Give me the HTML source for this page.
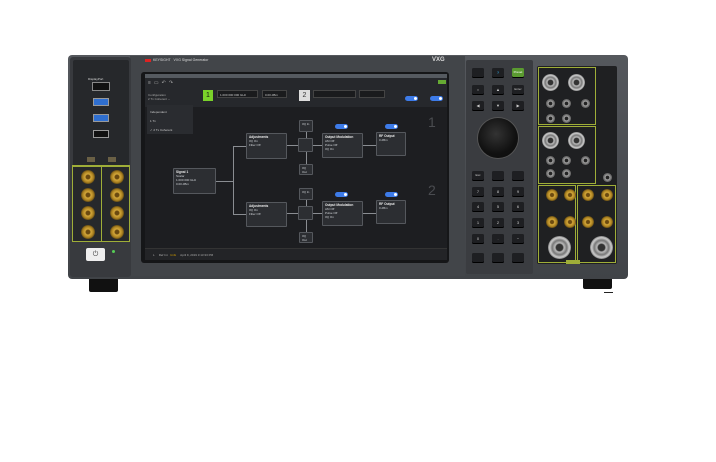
<!DOCTYPE html>
<html><head><meta charset="utf-8"><style>
*{margin:0;padding:0;box-sizing:border-box}
body{width:716px;height:462px;background:#fff;position:relative;overflow:hidden;font-family:"Liberation Sans",sans-serif}
.a{position:absolute}
.box{position:absolute;background:#2c2e32;border:1px solid #55585d;border-radius:1px;color:#cfd2d6;font-size:3px;padding:1px 2px;line-height:4px}
.box b{display:block;font-size:3.2px;color:#e8e8e8}
.ln{position:absolute;background:#8a8d92}
.tg{position:absolute;width:13px;height:5px;border-radius:3px;background:#3d7be8}
.tg:after{content:"";position:absolute;right:1px;top:1px;width:3px;height:3px;border-radius:50%;background:#fff}
.k{position:absolute;width:12px;height:9px;background:#1e1f22;border-radius:1.5px;color:#ccc;font-size:4px;text-align:center;line-height:9px;box-shadow:0 1px 0 #000}
.g{position:absolute;border-radius:50%;background:radial-gradient(circle,#6b4a10 0 20%,#d4a83a 30%,#a98020 55%,#5a4414 72%,#2a2418 100%)}
.b{position:absolute;border-radius:50%;background:radial-gradient(circle,#333 0 20%,#bbb 28%,#777 45%,#ccc 60%,#666 75%,#333 100%)}
.s{position:absolute;border-radius:50%;background:radial-gradient(circle,#222 0 25%,#aaa 35%,#666 60%,#888 80%,#333 100%)}
</style></head><body>
<div class="a" style="left:89px;top:276px;width:29px;height:16px;background:#111;border-radius:0 0 2px 2px"></div>
<div class="a" style="left:583px;top:276px;width:29px;height:13px;background:#111;border-radius:0 0 2px 2px"></div>
<div class="a" style="left:604px;top:292px;width:9px;height:1px;background:#222"></div>
<div class="a" style="left:68px;top:55px;width:560px;height:224px;background:linear-gradient(#55585d,#404347);border-radius:4px"></div>
<div class="a" style="left:130px;top:56px;width:335px;height:220px;background:#424549"></div>
<div class="a" style="left:70px;top:57px;width:61px;height:220px;background:#383a3e;border-radius:3px"></div>
<div class="a" style="left:73px;top:60px;width:56px;height:182px;background:#26282b;border-radius:2px"></div>
<div class="a" style="left:88px;top:77px;font-size:3px;color:#ddd">DisplayPort</div>
<div class="a" style="left:92px;top:82px;width:18px;height:9px;background:#111;border:1px solid #888"></div>
<div class="a" style="left:93px;top:98px;width:16px;height:8px;background:#2f6fd0;border:1px solid #999"></div>
<div class="a" style="left:93px;top:114px;width:16px;height:8px;background:#2f6fd0;border:1px solid #999"></div>
<div class="a" style="left:93px;top:130px;width:16px;height:8px;background:#111;border:1px solid #999"></div>
<div class="a" style="left:87px;top:157px;width:8px;height:5px;background:#6a6045"></div>
<div class="a" style="left:108px;top:157px;width:8px;height:5px;background:#6a6045"></div>
<div class="a" style="left:72px;top:165px;width:58px;height:77px;border:1px solid #9fae38;border-top:2px solid #9fae38"></div>
<div class="a" style="left:101px;top:165px;width:1px;height:77px;background:#9fae38"></div>
<div class="g" style="left:81px;top:170px;width:14px;height:14px"></div>
<div class="g" style="left:81px;top:188px;width:14px;height:14px"></div>
<div class="g" style="left:81px;top:206px;width:14px;height:14px"></div>
<div class="g" style="left:81px;top:225px;width:14px;height:14px"></div>
<div class="g" style="left:110px;top:170px;width:14px;height:14px"></div>
<div class="g" style="left:110px;top:188px;width:14px;height:14px"></div>
<div class="g" style="left:110px;top:206px;width:14px;height:14px"></div>
<div class="g" style="left:110px;top:225px;width:14px;height:14px"></div>
<div class="a" style="left:86px;top:248px;width:19px;height:13px;background:#eee;border-radius:2px;font-size:7px;text-align:center;line-height:13px;color:#444">⏻</div>
<div class="a" style="left:112px;top:250px;width:3px;height:3px;border-radius:50%;background:#5c5"></div>
<div class="a" style="left:145px;top:59px;width:6px;height:3px;background:#d22"></div>
<div class="a" style="left:153px;top:58px;font-size:3.5px;color:#ddd">KEYSIGHT &nbsp; VXG Signal Generator</div>
<div class="a" style="left:432px;top:57px;font-size:6px;color:#ddd;font-weight:bold">VXG</div>
<div class="a" style="left:141px;top:72px;width:308px;height:191px;background:#151618;border-radius:3px"></div>
<div class="a" style="left:145px;top:74px;width:302px;height:186px;background:#1d1e21"></div>
<div class="a" style="left:145px;top:74px;width:302px;height:4px;background:#555a60"></div>
<div class="a" style="left:145px;top:78px;width:302px;height:29px;background:#26282c"></div>
<div class="a" style="left:148px;top:80px;font-size:5px;color:#aaa;letter-spacing:3px">≡▭↶↷</div>
<div class="a" style="left:148px;top:93px;font-size:3px;color:#aaa">Configuration<br>2 Tx Coherent ⌄</div>
<div class="a" style="left:203px;top:90px;width:10px;height:11px;background:#7ad22a;color:#111;font-size:7px;text-align:center;line-height:11px">1</div>
<div class="a" style="left:217px;top:90px;width:41px;height:8px;background:#1a1b1d;border:1px solid #444;font-size:3px;color:#ccc;padding:2px">1.000 000 000 GHz</div>
<div class="a" style="left:262px;top:90px;width:25px;height:8px;background:#1a1b1d;border:1px solid #444;font-size:3px;color:#ccc;padding:2px">0.00 dBm</div>
<div class="a" style="left:299px;top:90px;width:11px;height:11px;background:#ddd;color:#333;font-size:7px;text-align:center;line-height:11px">2</div>
<div class="a" style="left:313px;top:90px;width:43px;height:8px;background:#1a1b1d;border:1px solid #444"></div>
<div class="a" style="left:359px;top:90px;width:26px;height:8px;background:#1a1b1d;border:1px solid #444"></div>
<div class="a" style="left:438px;top:80px;width:8px;height:4px;background:#6a3"></div>
<div class="tg" style="left:405px;top:96px"></div><div class="tg" style="left:430px;top:96px"></div>
<div class="a" style="left:147px;top:105px;width:46px;height:29px;background:#2a2c30;font-size:3px;color:#ccc;padding:3px;line-height:9px">Independent<br>1 Tx<br>✓ 2 Tx Coherent</div>
<div class="ln" style="left:216px;top:181px;width:18px;height:1px"></div>
<div class="ln" style="left:233px;top:146px;width:1px;height:69px"></div>
<div class="ln" style="left:233px;top:146px;width:13px;height:1px"></div>
<div class="ln" style="left:233px;top:214px;width:13px;height:1px"></div>
<div class="ln" style="left:287px;top:145px;width:35px;height:1px"></div>
<div class="ln" style="left:287px;top:213px;width:35px;height:1px"></div>
<div class="ln" style="left:363px;top:145px;width:13px;height:1px"></div>
<div class="ln" style="left:363px;top:213px;width:13px;height:1px"></div>
<div class="ln" style="left:306px;top:132px;width:1px;height:43px"></div>
<div class="ln" style="left:306px;top:200px;width:1px;height:43px"></div>
<div class="box" style="left:173px;top:168px;width:43px;height:26px"><b>Signal 1</b>Scalar<br>1.000 000 GHz<br>0.00 dBm</div>
<div class="box" style="left:246px;top:133px;width:41px;height:26px"><b>Adjustments</b>I/Q On<br>Filter Off</div>
<div class="box" style="left:246px;top:202px;width:41px;height:25px"><b>Adjustments</b>I/Q On<br>Filter Off</div>
<div class="box" style="left:299px;top:120px;width:14px;height:12px">I/Q In</div>
<div class="box" style="left:298px;top:138px;width:15px;height:14px"></div>
<div class="box" style="left:299px;top:164px;width:14px;height:11px">I/Q Out</div>
<div class="box" style="left:299px;top:188px;width:14px;height:12px">I/Q In</div>
<div class="box" style="left:298px;top:206px;width:15px;height:14px"></div>
<div class="box" style="left:299px;top:232px;width:14px;height:11px">I/Q Out</div>
<div class="box" style="left:322px;top:133px;width:41px;height:25px"><b>Output Modulation</b>AM Off<br>Pulse Off<br>I/Q On</div>
<div class="box" style="left:322px;top:201px;width:41px;height:25px"><b>Output Modulation</b>AM Off<br>Pulse Off<br>I/Q On</div>
<div class="box" style="left:376px;top:132px;width:30px;height:24px"><b>RF Output</b>0 dBm</div>
<div class="box" style="left:376px;top:200px;width:30px;height:24px"><b>RF Output</b>0 dBm</div>
<div class="tg" style="left:335px;top:124px"></div><div class="tg" style="left:385px;top:124px"></div>
<div class="tg" style="left:335px;top:192px"></div><div class="tg" style="left:385px;top:192px"></div>
<div class="a" style="left:428px;top:114px;font-size:14px;color:#4a4c50">1</div>
<div class="a" style="left:428px;top:182px;font-size:14px;color:#4a4c50">2</div>
<div class="a" style="left:145px;top:248px;width:302px;height:12px;background:#232427;border-top:1px solid #333;font-size:3px;color:#aaa;padding:4px 8px">L &nbsp;&nbsp;&nbsp; Ref Int &nbsp; <span style="color:#c90">Unlk</span> &nbsp;&nbsp;&nbsp; April 9, 2019 3:13:33 PM</div>
<div class="a" style="left:466px;top:60px;width:67px;height:214px;background:#3a3c40;border-radius:2px"></div>
<div class="k" style="left:472px;top:68px"></div><div class="k" style="left:492px;top:68px;color:#3bf">?</div><div class="k" style="left:512px;top:68px;background:#5a9a30;color:#fff;font-size:3px">Preset</div>
<div class="k" style="left:472px;top:85px">○</div><div class="k" style="left:492px;top:85px">▲</div><div class="k" style="left:512px;top:85px;font-size:3px">Enter</div>
<div class="k" style="left:472px;top:101px">◀</div><div class="k" style="left:492px;top:101px">▼</div><div class="k" style="left:512px;top:101px">▶</div>
<div class="a" style="left:478px;top:118px;width:40px;height:40px;border-radius:50%;background:radial-gradient(circle at 45% 40%,#333,#111 60%,#0a0a0a);box-shadow:0 0 0 1px #555"></div>
<div class="k" style="left:472px;top:171px;font-size:3px">Esc</div><div class="k" style="left:492px;top:171px"></div><div class="k" style="left:512px;top:171px"></div>
<div class="k" style="left:472px;top:187px">7</div><div class="k" style="left:492px;top:187px">8</div><div class="k" style="left:512px;top:187px">9</div>
<div class="k" style="left:472px;top:202px">4</div><div class="k" style="left:492px;top:202px">5</div><div class="k" style="left:512px;top:202px">6</div>
<div class="k" style="left:472px;top:218px">1</div><div class="k" style="left:492px;top:218px">2</div><div class="k" style="left:512px;top:218px">3</div>
<div class="k" style="left:472px;top:234px">0</div><div class="k" style="left:492px;top:234px">.</div><div class="k" style="left:512px;top:234px">−</div>
<div class="k" style="left:472px;top:253px"></div><div class="k" style="left:492px;top:253px"></div><div class="k" style="left:512px;top:253px"></div>
<div class="a" style="left:537px;top:66px;width:80px;height:198px;background:#1f2022;border-radius:2px"></div>
<div class="a" style="left:538px;top:67px;width:58px;height:58px;border:1px solid #9fae38"></div>
<div class="a" style="left:538px;top:126px;width:58px;height:58px;border:1px solid #9fae38"></div>
<div class="a" style="left:538px;top:185px;width:38px;height:78px;border:1px solid #9fae38"></div>
<div class="a" style="left:577px;top:185px;width:39px;height:78px;border:1px solid #9fae38"></div>
<div class="b" style="left:542px;top:74px;width:17px;height:17px"></div>
<div class="b" style="left:568px;top:74px;width:17px;height:17px"></div>
<div class="s" style="left:546px;top:99px;width:9px;height:9px"></div>
<div class="s" style="left:562px;top:99px;width:9px;height:9px"></div>
<div class="s" style="left:581px;top:99px;width:9px;height:9px"></div>
<div class="s" style="left:546px;top:114px;width:9px;height:9px"></div>
<div class="s" style="left:562px;top:114px;width:9px;height:9px"></div>
<div class="b" style="left:542px;top:132px;width:17px;height:17px"></div>
<div class="b" style="left:568px;top:132px;width:17px;height:17px"></div>
<div class="s" style="left:546px;top:156px;width:9px;height:9px"></div>
<div class="s" style="left:562px;top:156px;width:9px;height:9px"></div>
<div class="s" style="left:581px;top:156px;width:9px;height:9px"></div>
<div class="s" style="left:546px;top:169px;width:9px;height:9px"></div>
<div class="s" style="left:562px;top:169px;width:9px;height:9px"></div>
<div class="s" style="left:603px;top:173px;width:9px;height:9px"></div>
<div class="g" style="left:546px;top:189px;width:12px;height:12px"></div>
<div class="g" style="left:564px;top:189px;width:12px;height:12px"></div>
<div class="g" style="left:582px;top:189px;width:12px;height:12px"></div>
<div class="g" style="left:601px;top:189px;width:12px;height:12px"></div>
<div class="g" style="left:546px;top:216px;width:12px;height:12px"></div>
<div class="g" style="left:564px;top:216px;width:12px;height:12px"></div>
<div class="g" style="left:582px;top:216px;width:12px;height:12px"></div>
<div class="g" style="left:601px;top:216px;width:12px;height:12px"></div>
<div class="b" style="left:548px;top:236px;width:23px;height:23px"></div>
<div class="b" style="left:590px;top:236px;width:23px;height:23px"></div>
<div class="a" style="left:566px;top:260px;width:14px;height:4px;background:#9fae38"></div>
</body></html>
